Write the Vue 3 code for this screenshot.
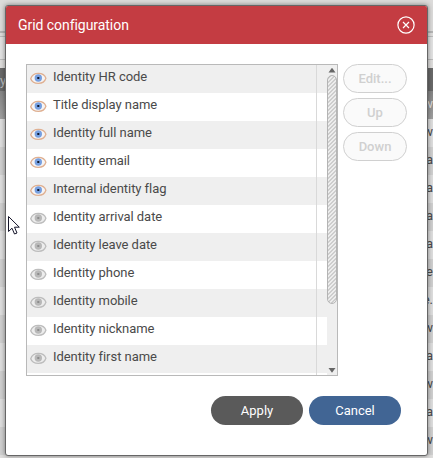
<script setup>
const fields = [
  ['Identity HR code', true],
  ['Title display name', true],
  ['Identity full name', true],
  ['Identity email', true],
  ['Internal identity flag', true],
  ['Identity arrival date', false],
  ['Identity leave date', false],
  ['Identity phone', false],
  ['Identity mobile', false],
  ['Identity nickname', false],
  ['Identity first name', false],
].map(([label, visible]) => ({ label, visible }))

const cells = ['w', 'va', 'va', 'va', 'a', 've', 'e.', 'w', 'a', 'w', 'a', 'w']
</script>

<template>
  <div class="page">
    <div class="backdrop">
      <div class="toolbar"></div>
      <div class="search"></div>
      <div class="thead"><span>y</span></div>
      <div class="filters"><span>w</span></div>
      <div v-for="(cell, i) in cells" :key="i" class="line"><span>{{ cell }}</span></div>
    </div>

    <section class="dialog">
      <header class="head">
        <h1>Grid configuration</h1>
        <svg class="close" width="18" height="18" viewBox="0 0 18 18">
          <circle cx="9" cy="9" r="8.1" />
          <path d="M6 6l6 6M12 6l-6 6" />
        </svg>
      </header>
      <div class="body">
        <div class="list">
          <div class="rows">
            <div v-for="f in fields" :key="f.label" class="row" :class="{ off: !f.visible }">
              <svg class="eye" width="17" height="13" viewBox="0 0 17 13">
                <path class="white" d="M.7 6.700C1.800 3.200 4.600 1.300 8.400 1.300s6.600 2 7.500 5c-1 3.200-3.800 5.100-7.500 5.100-3.600 0-6.600-1.600-7.700-4.700z" />
                <circle class="iris" cx="8.300" cy="6" r="3.700" />
                <rect class="pupil" x="7.300" y="5" width="2" height="2" />
                <path class="lid" d="M.7 6.700C1.800 3.200 4.600 1.300 8.400 1.300s6.600 2 7.500 5c-1 3.200-3.800 5.100-7.500 5.100-3.600 0-6.600-1.600-7.700-4.700z" />
              </svg>
              <span class="label">{{ f.label }}</span>
            </div>
          </div>
          <div class="scroll">
            <svg width="10" height="10" viewBox="0 0 10 10"><path d="M1.500 7.500L5 2.800l3.500 4.700z" /></svg>
            <div class="thumb"></div>
            <svg class="down" width="10" height="10" viewBox="0 0 10 10"><path d="M1.500 3L5 7.700 8.500 3z" /></svg>
          </div>
        </div>
        <div class="side">
          <button>Edit...</button>
          <button>Up</button>
          <button>Down</button>
        </div>
      </div>
      <footer class="actions">
        <button class="apply">Apply</button>
        <button class="cancel">Cancel</button>
      </footer>
    </section>

    <svg class="pointer" width="14" height="21" viewBox="0 0 14 21">
      <path d="M1.500 1.500v15l3.500-3.300 2.500 5.800 2.500-1-2.500-5.800h4.800z" />
    </svg>
  </div>
</template>

<style>
body { overflow: hidden; }
</style>

<style scoped>
* { box-sizing: border-box; }
.page {
  position: relative;
  width: 433px;
  height: 458px;
  overflow: hidden;
  font: 13px/18px Roboto, sans-serif;
  color: #4a4a4a;
}
.backdrop { height: 458px; overflow: hidden; background: #dedddc; }
.toolbar { height: 33px; border-bottom: 2px solid #b5b5b5; background: #dcdbda; }
.search { height: 24px; margin: 3px 0 8px; border: 1px solid #bbb; border-width: 1px 0; background: #e2e2e2; }
.thead {
  height: 23px;
  padding: 4px 0 0;
  background: #696969;
  color: #bbb;
}
.filters {
  display: flex;
  justify-content: flex-end;
  height: 28px;
  padding-top: 4px;
  background: linear-gradient(#858585, #a0a0a0);
  color: #ddd;
}
.line {
  display: flex;
  justify-content: flex-end;
  height: 28px;
  padding-top: 4px;
  background: #dedede;
  white-space: nowrap;
}
.line:nth-child(even) { background: #d0d0d0; }
.dialog {
  position: absolute;
  left: 5px;
  top: 5px;
  width: 423px;
  height: 451px;
  border: 1px solid #666;
  border-radius: 3px;
  background: #fff;
  box-shadow: 0 0 5px rgba(0, 0, 0, .45);
  overflow: hidden;
}
.head {
  display: flex;
  align-items: center;
  justify-content: space-between;
  height: 38px;
  padding: 0 12px;
  background: #c43c42;
  color: #fff;
}
h1 { margin: 0 0 1px; font-size: 14px; line-height: 18px; font-weight: 400; letter-spacing: -.05px; }
.close { fill: none; stroke: #fff; stroke-width: 1.2; }
.body { display: flex; gap: 5px; padding: 20px 0 0 20px; }
.list { display: flex; width: 312px; height: 312px; border: 1px solid #b9b9b9; overflow: hidden; }
.rows {
  flex: 1;
  background: linear-gradient(#d9d9d9, #d9d9d9) 289px 0 / 1px 100% no-repeat,
    repeating-linear-gradient(#efefef 0 28px, #fff 28px 56px);
}
.row { display: flex; gap: 6px; height: 28px; padding: 3px 0 0 3px; }
.label { letter-spacing: -.05px; }
.eye { margin-top: 4px; }
.lid { fill: none; stroke: #dfb092; stroke-width: 1.3; }
.white { fill: #f5f4f5; }
.iris { fill: #769fe0; }
.pupil { fill: #10182c; }
.off .lid { stroke: #bdbdbd; }
.off .white { fill: #ededed; }
.off .iris { fill: #b8b8b8; }
.off .pupil { fill: #8c8c8c; }
.scroll { display: flex; flex-direction: column; width: 10px; background: #efefef; }
.scroll svg { fill: #666; }
.scroll .down { margin-top: auto; }
.thumb {
  height: 229px;
  border: 1px solid #b4b4b4;
  border-radius: 5px;
  background: repeating-linear-gradient(135deg, #ededed 0 1.4px, #cdcdcd 1.4px 2.828px);
}
button { margin: 0; padding: 0; font: 13px/18px Roboto, sans-serif; }
.side { display: flex; flex-direction: column; gap: 5px; }
.side button {
  width: 64px;
  height: 29px;
  border: 1px solid #d0d0d0;
  border-radius: 15px;
  background: #fafafa;
  color: #d0d0d0;
  font-weight: 500;
}
.actions { display: flex; gap: 6px; padding: 20px 0 0 205px; }
.actions button { width: 92px; height: 29px; border: 0; border-radius: 15px; color: #fff; }
.apply { background: #5a5a5a; }
.cancel { background: #416594; }
.pointer { position: absolute; left: 7px; top: 215px; fill: #fff; stroke: #15152a; stroke-width: 1; }
</style>
